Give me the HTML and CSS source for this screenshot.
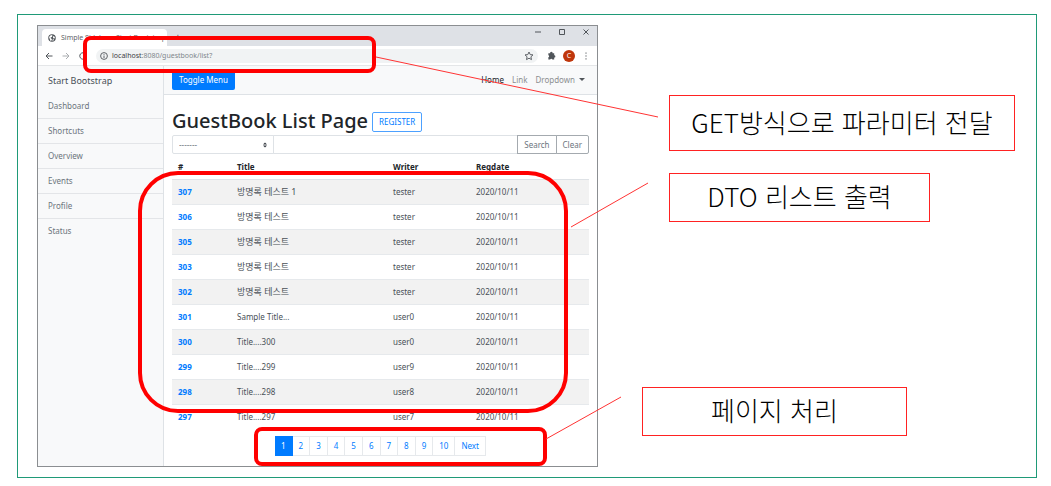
FILE: index.html
```html
<!DOCTYPE html>
<html lang="ko">
<head>
<meta charset="utf-8">
<title>GuestBook List Page</title>
<link rel="stylesheet" href="styles.css">
</head>
<body>
<main class="board">
  <section class="window">
    <div class="tabbar">
      <div class="tab">
        <svg class="globe" viewBox="0 0 16 16"><circle cx="8" cy="8" r="7.5" fill="#50555a"/><path d="M2 6l4-4 3 1-1 3-3 1 1 2 2 1-1 3-2 1M10 4l4 2-1 3-2 0-1-2zM9 11l3-1-1 3-2 1z" fill="#fff"/></svg>
        <span class="tab-title">Simple Sidebar - Start Bootstrap</span>
      </div>
      <button class="plain new-tab" aria-label="New tab">+</button>
      <div class="controls">
        <button class="plain" aria-label="Minimize"><svg viewBox="0 0 8 8"><path d="M1 4h6"/></svg></button>
        <button class="plain" aria-label="Maximize"><svg viewBox="0 0 8 8"><path d="M1.5 1.5h5v5h-5z"/></svg></button>
        <button class="plain" aria-label="Close"><svg viewBox="0 0 8 8"><path d="M1.5 1.5l5 5M6.500 1.500l-5 5"/></svg></button>
      </div>
    </div>
    <div class="toolbar">
      <button class="plain" aria-label="Back"><svg viewBox="0 0 8 8"><path d="M7.500 4H1M4 1L1 4l3 3"/></svg></button>
      <button class="plain dim" aria-label="Forward"><svg viewBox="0 0 8 8"><path d="M.5 4H7M4 1l3 3-3 3"/></svg></button>
      <button class="plain" aria-label="Reload"><svg viewBox="0 0 8 8"><path d="M6.500 2A3.200 3.200 0 1 0 7 5M7 .5v2H5"/></svg></button>
      <div class="address">
        <svg viewBox="0 0 8 8"><circle cx="4" cy="4" r="3.400"/><path d="M4 3.500V6M4 2v.8"/></svg>
        <span class="url"><b>localhost</b>:8080/guestbook/list?</span>
        <svg class="star" viewBox="0 0 10 10"><path d="M5 1l1.200 2.600 2.800.3-2.100 1.900.6 2.800L5 7.200 2.500 8.600l.6-2.800L1 3.900l2.800-.3z"/></svg>
      </div>
      <svg class="puzzle" viewBox="0 0 10 10"><path d="M1.500 2.500h2a1.400 1.400 0 1 1 2.700 0H8v2.200a1.300 1.300 0 1 1 0 2.600V9.500H6a1.300 1.300 0 0 0-2.500 0h-2V7a1.200 1.200 0 0 0 0-2.300z"/></svg>
      <span class="avatar">C</span>
      <button class="plain dots" aria-label="More"><svg viewBox="0 0 8 8"><path d="M4 .5v1.200M4 3.400v1.200M4 6.300v1.200"/></svg></button>
    </div>
    <div class="page">
      <aside class="sidebar">
        <div class="brand">Start Bootstrap</div>
        <a href="#">Dashboard</a>
        <a href="#">Shortcuts</a>
        <a href="#">Overview</a>
        <a href="#">Events</a>
        <a href="#">Profile</a>
        <a href="#">Status</a>
      </aside>
      <div class="content">
        <nav class="navbar">
          <button class="toggle">Toggle Menu</button>
          <div class="links">
            <a class="active" href="#">Home</a>
            <a href="#">Link</a>
            <a class="drop" href="#">Dropdown</a>
          </div>
        </nav>
        <div class="body">
          <div class="headline">
            <h1>GuestBook List Page</h1>
            <button class="register">REGISTER</button>
          </div>
          <form class="search">
            <div class="select">
              <select aria-label="Search type"><option>-------</option></select>
              <svg viewBox="0 0 4 5"><path d="M2 0l2 2H0zM2 5l2-2H0z"/></svg>
            </div>
            <input type="text" aria-label="Keyword">
            <button type="button">Search</button>
            <button type="button">Clear</button>
          </form>
          <table>
            <thead><tr><th class="c-id">#</th><th class="c-title">Title</th><th class="c-writer">Writer</th><th>Regdate</th></tr></thead>
            <tbody>
              <tr><td><a href="#">307</a></td><td class="ko">방명록 테스트 1</td><td>tester</td><td>2020/10/11</td></tr>
              <tr><td><a href="#">306</a></td><td class="ko">방명록 테스트</td><td>tester</td><td>2020/10/11</td></tr>
              <tr><td><a href="#">305</a></td><td class="ko">방명록 테스트</td><td>tester</td><td>2020/10/11</td></tr>
              <tr><td><a href="#">303</a></td><td class="ko">방명록 테스트</td><td>tester</td><td>2020/10/11</td></tr>
              <tr><td><a href="#">302</a></td><td class="ko">방명록 테스트</td><td>tester</td><td>2020/10/11</td></tr>
              <tr><td><a href="#">301</a></td><td>Sample Title...</td><td>user0</td><td>2020/10/11</td></tr>
              <tr><td><a href="#">300</a></td><td>Title....300</td><td>user0</td><td>2020/10/11</td></tr>
              <tr><td><a href="#">299</a></td><td>Title....299</td><td>user9</td><td>2020/10/11</td></tr>
              <tr><td><a href="#">298</a></td><td>Title....298</td><td>user8</td><td>2020/10/11</td></tr>
              <tr><td><a href="#">297</a></td><td>Title....297</td><td>user7</td><td>2020/10/11</td></tr>
            </tbody>
          </table>
          <nav class="pager">
            <a class="current" href="#">1</a><a href="#">2</a><a href="#">3</a><a href="#">4</a><a href="#">5</a><a href="#">6</a><a href="#">7</a><a href="#">8</a><a href="#">9</a><a href="#">10</a><a href="#">Next</a>
          </nav>
        </div>
      </div>
    </div>
  </section>
  <section class="notes">
    <p class="note note-get">GET방식으로 파라미터 전달</p>
    <p class="note note-list">DTO 리스트 출력</p>
    <p class="note note-page">페이지 처리</p>
  </section>
</main>
<svg class="marks">
  <g class="frames">
    <rect x="85" y="38" width="289" height="33" rx="6"/>
    <rect x="140" y="173" width="426" height="238" rx="38"/>
    <rect x="256" y="429" width="289" height="35" rx="6"/>
  </g>
  <path class="leads" d="M376 57L658 117M571 227L648 183M546 439L621 397"/>
</svg>
</body>
</html>
```

FILE: styles.css
```css
* { box-sizing: border-box; }
body {
  margin: 0;
  padding: 14px 14px 8px 17px;
  background: #fff;
  color: #212529;
  font: 8px/12px "Noto Sans", "Noto Sans CJK KR", sans-serif;
}
a { color: inherit; text-decoration: none; }
button, input, select { font: inherit; margin: 0; padding: 0; }
svg { display: block; }

.board {
  display: flex;
  align-items: flex-start;
  border: 1px solid #1f9a78;
  padding: 10px 21px 10px 19px;
}
.window {
  flex: 0 1 561px;
  border: 1px solid #8b8e91;
  background: #fff;
}

.tabbar {
  display: flex;
  align-items: flex-end;
  height: 20px;
  padding-left: 4px;
  background: #dee1e6;
}
.tab {
  display: flex;
  align-items: center;
  gap: 5px;
  width: 125px;
  height: 17px;
  padding-left: 6px;
  border-radius: 4px 4px 0 0;
  background: #fff;
}
.globe { width: 8px; height: 8px; }
.tab-title { font-size: 7px; color: #5f6368; }
.plain {
  border: 0;
  background: none;
  color: #50555a;
}
.plain svg, .address svg {
  width: 8px;
  height: 8px;
  fill: none;
  stroke: currentColor;
}
.new-tab { padding: 0 8px 3px; font-size: 10px; }
.controls {
  display: flex;
  align-self: flex-start;
  gap: 16px;
  margin-left: auto;
  padding: 2px 7px;
}
.toolbar {
  display: flex;
  align-items: center;
  gap: 9px;
  height: 20px;
  padding: 0 7px;
  border-bottom: 1px solid #e4e6e8;
}
.toolbar .dim { color: #aaadb0; }
.address {
  flex: 1;
  display: flex;
  align-items: center;
  gap: 4px;
  height: 14px;
  padding: 0 4px;
  border-radius: 7px;
  background: #f1f3f4;
  color: #5f6368;
  font-size: 7px;
}
.url { flex: 1; color: #80868b; }
.url b { color: #3c4043; font-weight: 400; }
.address .star { width: 10px; height: 10px; }
.puzzle { width: 9px; height: 9px; fill: #50555a; }
.avatar {
  width: 12px;
  height: 12px;
  margin: 0 -2px;
  border-radius: 50%;
  background: #bf360c;
  color: #fff;
  font-size: 7px;
  text-align: center;
}

.page { display: flex; }
.sidebar {
  flex: 0 0 126px;
  border-right: 1px solid #dee2e6;
  background: #f8f9fa;
  color: #6c757d;
}
.brand {
  padding: 9px 10px 7px;
  color: #495057;
  font-size: 9px;
}
.sidebar a {
  display: block;
  padding: 6px 10px;
  border-bottom: 1px solid #e3e5e8;
}
.sidebar a:last-child { border: 0; }
.content { flex: 1; }
.navbar {
  display: flex;
  align-items: center;
  justify-content: space-between;
  height: 29px;
  padding: 0 12px 0 8px;
  border-bottom: 1px solid #dee2e6;
  background: #f8f9fa;
}
.toggle {
  height: 19px;
  padding: 0 7px;
  border: 0;
  border-radius: 2px;
  background: #007bff;
  color: #fff;
}
.links { display: flex; gap: 8px; color: #8c8e90; }
.links .active { color: #212529; }
.drop::after {
  content: "";
  display: inline-block;
  margin-left: 4px;
  vertical-align: 2px;
  border: 3px solid transparent;
  border-top-color: #50555a;
  border-bottom: 0;
}

.body { padding: 11px 8px 10px; }
.headline { display: flex; align-items: center; gap: 4px; height: 29px; }
h1 { margin: 0; font-size: 20px; line-height: 28px; font-weight: 500; }
.register {
  height: 20px;
  margin-top: 2px;
  padding: 0 6px;
  border: 1px solid #4da1ff;
  border-radius: 2px;
  background: #fff;
  color: #007bff;
}
.search { display: flex; height: 19px; }
.select { position: relative; flex: 0 0 102px; }
.select select {
  width: 100%;
  height: 19px;
  padding: 0 6px;
  appearance: none;
  border: 1px solid #dee2e6;
  border-radius: 2px 0 0 2px;
  background: #fff;
  color: #6c757d;
}
.select svg {
  position: absolute;
  top: 7px;
  right: 7px;
  width: 4px;
  height: 6px;
  fill: #343a40;
}
.search input {
  flex: 1;
  min-width: 0;
  margin-left: -1px;
  border: 1px solid #dee2e6;
}
.search button {
  margin-left: -1px;
  padding: 0 6px;
  border: 1px solid #a4aaaf;
  background: #fff;
  color: #6c757d;
}
.search button:last-child { border-radius: 0 2px 2px 0; }

table {
  width: 100%;
  border-spacing: 0;
  table-layout: fixed;
}
th, td { padding: 0 6px; text-align: left; }
th { height: 26px; border-bottom: 1px solid #dee2e6; }
td { height: 25px; border-bottom: 1px solid #e6e9ec; color: #495057; }
tbody tr:last-child td { border-bottom-color: transparent; }
tbody tr:nth-child(odd) { background: #f2f2f2; }
td a { color: #007bff; font-weight: 700; }
.ko { font-size: 9px; }
.c-id { width: 59px; }
.c-title { width: 156px; }
.c-writer { width: 83px; }

.pager { display: flex; justify-content: center; margin-top: 6px; }
.pager a {
  padding: 3px 6px;
  border: 1px solid #e6e9ec;
  border-left: 0;
  color: #007bff;
}
.pager .current { border-color: #007bff; background: #007bff; color: #fff; }

.notes {
  flex: 1;
  display: flex;
  flex-direction: column;
  align-items: flex-start;
  padding: 70px 0 0 44px;
}
.note {
  margin: 0;
  border: 1px solid #f22;
  color: #000;
  font: 300 26px/44px "Noto Sans CJK KR", sans-serif;
  text-align: center;
  white-space: nowrap;
}
.note-get {
  width: calc(100% - 27px);
  margin-left: 27px;
  padding: 4px 0 6px;
}
.note-list {
  width: 70%;
  margin: 22px 0 0 27px;
  padding-bottom: 3px;
}
.note-page {
  width: 71%;
  margin-top: 165px;
  padding-bottom: 3px;
}

.marks {
  position: absolute;
  top: 0;
  left: 0;
  width: 100%;
  height: 100%;
  pointer-events: none;
  fill: none;
  stroke: #f00;
}
.frames { stroke-width: 4px; }
.leads { stroke: #f33; stroke-width: 1px; }
```
